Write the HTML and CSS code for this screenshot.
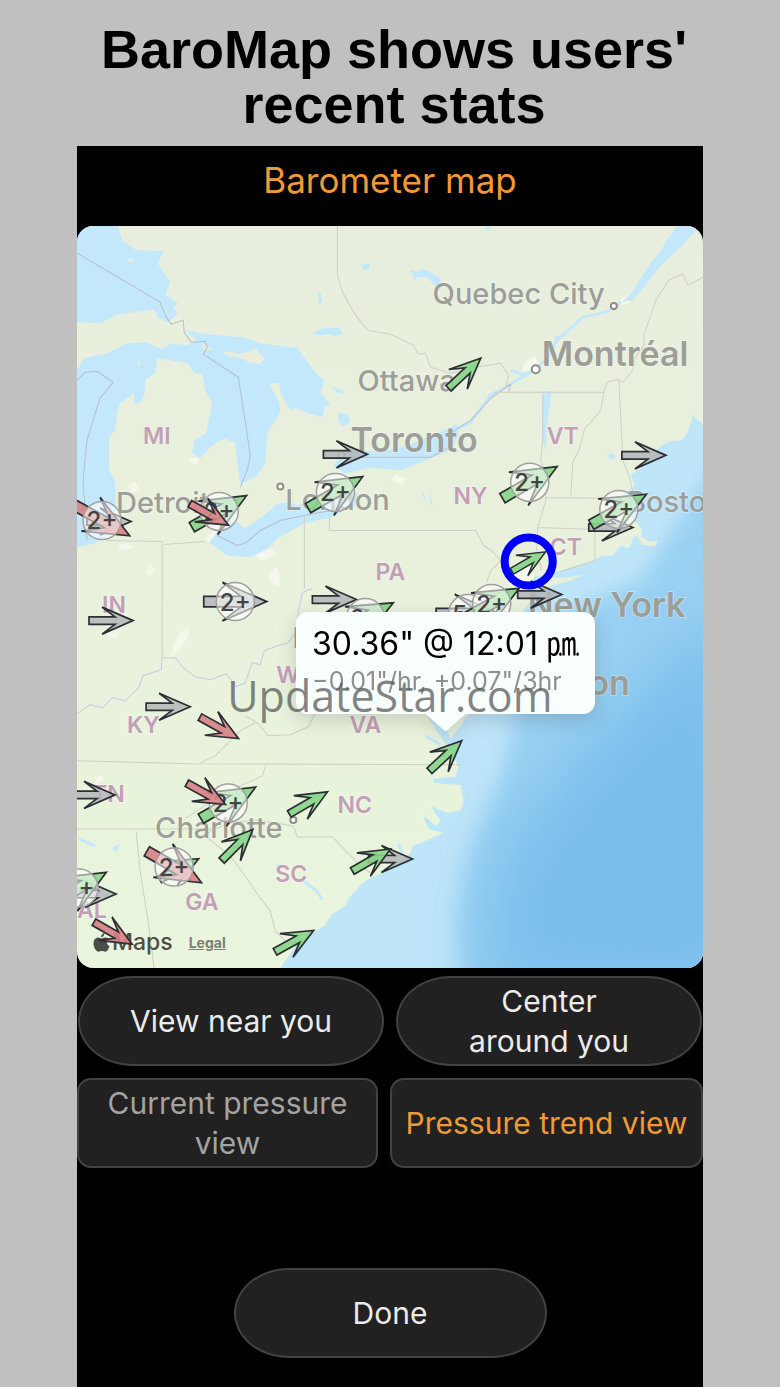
FILE: index.html
```html
<!DOCTYPE html>
<html lang="en">
<head>
    <meta charset="UTF-8">
    <meta name="viewport" content="width=device-width, initial-scale=1.0">
    <title>Barometer map</title>
    <link rel="stylesheet" href="styles.css">
</head>
<body>
    <h1 class="headline">BaroMap shows users' recent stats</h1>

    <main class="phone">
        <h2 class="screen-title">Barometer map</h2>

        <div class="map">
            <svg class="map-canvas" viewBox="77 226 625 741" preserveAspectRatio="xMidYMid slice" role="img" aria-label="Pressure trend map">
                <defs>
                    <path id="arrow" d="M-22,-3.7 L4,-3.7 L-9,-13.5 L22,0 L-9,13.5 L4,3.7 L-22,3.7 Z"/>
                    <linearGradient id="land" x1="0" y1="0" x2="0" y2="1">
                        <stop offset="0" stop-color="#e8eedd"/>
                        <stop offset="1" stop-color="#e9f5dc"/>
                    </linearGradient>
                    <filter id="soft" x="-20%" y="-20%" width="140%" height="140%">
                        <feGaussianBlur stdDeviation="10"/>
                    </filter>
                    <filter id="softer" x="-30%" y="-30%" width="160%" height="160%">
                        <feGaussianBlur stdDeviation="35"/>
                    </filter>
                    <clipPath id="ocean-clip">
                        <path id="ocean-shape" d="M702,424 L697,420 L692,415 L687,432 L681,440 L668,441 L656,449 L650,460 L640,468 L630,474 L634,486 L622,493 L624,505 L632,518 L641,528 L640,541 L634,534 L628,548 L620,545 L612,555 L600,556 L590,561 L560,570 L545,576 L534,576 L528,586 L531,597 L522,612 L510,620 L500,650 L480,690 L468,713 L458,728 L450,738 L446,728 L436,712 L426,714 L440,736 L448,748 L458,765 L455,776 L432,778 L434,782 L460,784 L463,800 L460,809 L447,812 L430,805 L440,820 L436,825 L422,814 L428,828 L443,832 L425,840 L412,845 L410,852 L400,860 L385,870 L370,877 L362,882 L350,895 L345,905 L332,913 L324,925 L310,933 L295,945 L288,955 L280,967 L702,967 Z"/>
                    </clipPath>
                </defs>

                <!-- land and towns -->
                <rect x="77" y="226" width="625" height="741" fill="url(#land)"/>
                <path class="city-area" d="M524,362 l10,-6 5,8 -6,10 -12,-1z M618,300 l8,-4 4,6 -9,3z M77,393 l6,-4 -1,10 -5,5z M190,457 l9,1 -2,6 -8,-2z M128,485 l7,-4 4,8 -8,4z M149,563 l6,6 -6,8 -3,-5z M268,575 l8,-9 4,12 -1,8 -8,-3z M180,632 l8,-6 0,9 -8,14 -11,10 5,-16z M110,630 l9,2 -4,6 -8,-2z M250,552 l22,-4 4,6 -14,7z M97,775 l8,2 -10,8z M508,578 l20,-14 8,14 -16,12z M470,595 l18,-8 4,12 -24,8z M395,474 l10,4 -3,6 -12,-4z M205,538 l12,-12 6,4 -12,14z M120,543 l14,2 -6,5 -10,-2z"/>

                <!-- ocean -->
                <use href="#ocean-shape" fill="#bfe5f9"/>
                <g clip-path="url(#ocean-clip)">
                    <path d="M720,460 L685,510 L640,580 L580,605 L530,640 L514,712 L510,735 L504,765 L492,800 L472,845 L463,880 L456,930 L466,990 L760,1000 Z" fill="#9ad1f2" filter="url(#soft)"/>
                    <path d="M740,600 L670,660 L610,720 L540,800 L500,850 L480,990 L760,1000 Z" fill="#78beeb" filter="url(#softer)"/>
                </g>
                <path class="island" d="M530,583 L545,577 L566,577 L582,574 L570,580 L548,586 L533,589 Z M640,536 L648,541 L657,540 L654,546 L640,544 Z M457,808 L462,795 L460,806 Z"/>

                <!-- lakes and rivers -->
                <g class="water">
                    <path d="M77,226 L118,226 L122,240 L136,250 L163,251 L158,264 L170,282 L165,295 L178,303 L173,307 L178,313 L168,322 L158,318 L154,309 L135,312 L118,314 L100,323 L77,322 Z"/>
                    <path d="M77,370 L84,358 L93,356 L107,353 L127,343 L147,342 L162,349 L170,343 L187,345 L196,340 L185,330 L200,333 L217,335 L244,337 L260,343 L277,345 L297,348 L303,356 L310,365 L316,374 L324,380 L320,393 L330,403 L324,406 L322,417 L307,413 L294,407 L290,410 L280,393 L279,383 L269,383 L279,402 L280,412 L267,433 L265,463 L257,475 L240,484 L237,463 L235,443 L224,438 L210,447 L200,458 L192,453 L194,440 L206,433 L212,403 L205,390 L202,373 L195,373 L187,363 L170,360 L157,358 L155,373 L145,380 L145,392 L140,403 L134,403 L134,393 L120,403 L117,413 L115,430 L109,437 L109,470 L115,480 L116,510 L107,537 L94,543 L77,547 Z"/>
                    <path d="M209,542 L220,528 L232,518 L238,522 L244,528 L264,515 L277,503 L290,502 L296,505 L320,499 L336,497 L358,492 L354,505 L330,517 L304,523 L277,538 L268,548 L250,557 L227,555 Z"/>
                    <path d="M225,500 l9,-5 4,8 -6,8 -8,-3z"/>
                    <path d="M333,466 L340,455 L352,450 L375,451 L395,449 L420,440 L440,432 L456,424 L458,434 L450,450 L425,460 L400,470 L370,467 L345,473 Z"/>
                    <path d="M621,302 L630,294 L645,270 L660,250 L666,240 L676,226 L698,226 L682,245 L660,265 L645,285 L632,300 Z"/>
                    <path d="M541,391 L551,391 L549,405 L546,425 L545,450 L541,436 L542,410 Z"/>
                    <path d="M311,333 l14,-6 6,1 8,-1 4,7 -8,2 -8,-2 -8,1z M361,265 l9,-2 -2,7 -6,0z M317,293 l3,-1 2,8 -3,6z M410,270 l8,2 4,-3 10,4 8,6 2,10 -8,-4 -8,-8 -8,0 -4,4z M337,412 l10,2 3,8 -8,4 -4,-6z M606,455 l6,-2 4,5 -6,1z M484,228 l6,-2 -2,6z M332,387 l10,3 2,4 -8,-2z M112,847 l8,-4 -4,8z M422,488 l3,12 -3,-4z M430,490 l2,18 -3,-8z M275,864 l6,-1 -2,5z"/>
                    <path class="stream" d="M452,430 L470,422 L490,395 L510,384 L530,372 L545,360 L556,340 L572,326 L582,317 L605,312 L620,302"/>
                    <path class="stream" d="M510,370 L520,374 L530,372 M554,338 L566,334"/>
                    <path class="stream" d="M302,879 L316,890 L322,898 M425,735 L440,744 M79,838 L95,845 M398,843 L402,852"/>
                </g>
                <path class="island" d="M222,352 l8,-1 8,3 12,-3 6,-3 4,6 5,4 -6,6 -8,-1 -10,-5 -12,-2z M200,344 l8,2 4,4 -8,0z M126,260 l6,-2 2,3 -6,1z M136,362 l4,-1 0,4z"/>

                <!-- borders -->
                <g class="border">
                    <path class="national" d="M77,253 L160,302 L165,315 L171,324 L183,320 L184,332 L191,342 L205,341 L207,347 L203,354 L238,377 L244,415 L250,455 L247,470 L240,487 M217,535 L237,545 L246,542 L260,530 L280,520 L304,515 L330,510 L352,497 M345,457 L430,457 L448,447 L454,430 L470,420 L490,398 L510,384 L508,392"/>
                    <path class="national" d="M77,380 L85,372 L97,371 L113,382 L100,398 L93,420 L87,440 L83,480 L87,540"/>
                    <path d="M493,392 L603,392 L606,382 L617,379 L622,382 L632,370 L634,358 L643,345 L643,335 L655,300 L668,280 L682,274 L687,285 L702,277"/>
                    <path d="M337,226 L337,275 L342,292 L355,315 L367,330 L390,334 L413,345 L418,354 L425,353 L430,367 L450,373 L475,367 L500,363 L508,375 L505,388"/>
                    <path d="M107,540 L162,541 L162,657 M164,544 L205,541 M304,516 V588 M329,516 V530 H475 L483,545 L493,552 L500,560 L490,570 L486,582"/>
                    <path class="river" d="M312,588 L302,592 L298,610 L297,630 L288,642 L277,645 L264,650 L260,664 L252,662 L245,682 L236,686 L226,673 L210,679 L195,676 L184,668 L175,657 L162,657 L161,669 L143,675 L138,688 L125,700 L112,697 L103,707 L90,704 L77,713"/>
                    <path d="M77,760 L190,763 L460,764 M77,828 H212 M205,835 L212,829 L230,822 L257,819 L293,825 L297,836 H332 L360,865 L370,872 M136,830 L140,870 L148,920 L154,967 M205,835 L230,855 L245,875 L257,893 L270,910 L275,930 L290,945"/>
                    <path d="M266,763 L262,775 L240,785 L212,800 L186,817 M200,762 L215,755 L225,745 L240,730 L255,722 M245,715 L258,723 L268,735 L290,734 L308,726 L315,712"/>
                    <path d="M542,395 V440 L540,460 L545,475 L545,500 L537,527 L536,550 L541,570 M603,392 L600,410 L590,422 L584,428 L578,450 L572,462 L570,495 M618,380 L622,460 L628,475 L632,491 M545,497 L620,498 L624,496 M537,527 L595,529 L612,528 M594,529 V560 L560,571"/>
                </g>

                <!-- place names -->
                <g class="city">
                    <text x="432" y="304">Quebec City</text>
                    <text x="357" y="391">Ottawa</text>
                    <text x="116" y="513">Detroit</text>
                    <text x="285" y="510">London</text>
                    <text x="626" y="512">Boston</text>
                    <text x="292" y="647">P</text>
                    <text x="155" y="837">Charlotte</text>
                </g>
                <g class="city big">
                    <text x="541" y="366">Montréal</text>
                    <text x="350" y="452">Toronto</text>
                    <text x="527" y="616">New York</text>
                    <text x="629" y="694" text-anchor="end">Washington</text>
                </g>
                <g class="state">
                    <text x="143" y="444">MI</text>
                    <text x="546" y="444">VT</text>
                    <text x="453" y="504">NY</text>
                    <text x="549" y="554">CT</text>
                    <text x="375" y="579">PA</text>
                    <text x="102" y="612">IN</text>
                    <text x="276" y="682">WV</text>
                    <text x="127" y="732">KY</text>
                    <text x="349" y="732">VA</text>
                    <text x="92" y="801">TN</text>
                    <text x="337" y="812">NC</text>
                    <text x="275" y="881">SC</text>
                    <text x="185" y="909">GA</text>
                    <text x="77" y="917">AL</text>
                </g>
                <g class="dot">
                    <circle cx="613" cy="306" r="3"/>
                    <circle cx="535" cy="369" r="4"/>
                    <circle cx="341" cy="455" r="3"/>
                    <circle cx="280" cy="486" r="3"/>
                    <circle cx="293" cy="819" r="3"/>
                </g>

                <!-- stations -->
                <g class="station">
                    <use class="up" href="#arrow" transform="translate(464 373) rotate(-43)"/>
                    <use class="flat" href="#arrow" transform="translate(345 454)"/>
                    <use class="flat" href="#arrow" transform="translate(643 455)"/>
                    <use class="flat" href="#arrow" transform="translate(109 521)"/>
                    <use class="flat" href="#arrow" transform="translate(610 527)"/>
                    <use class="flat" href="#arrow" transform="translate(539 594)"/>
                    <use class="flat" href="#arrow" transform="translate(334 599)"/>
                    <use class="flat" href="#arrow" transform="translate(111 620)"/>
                    <use class="flat" href="#arrow" transform="translate(168 706)"/>
                    <use class="down" href="#arrow" transform="translate(219 727) rotate(29)"/>
                    <use class="flat" href="#arrow" transform="translate(93 794)"/>
                    <use class="up" href="#arrow" transform="translate(308 802) rotate(-30)"/>
                    <use class="flat" href="#arrow" transform="translate(390 858)"/>
                    <use class="up" href="#arrow" transform="translate(371 859) rotate(-30)"/>
                    <use class="up" href="#arrow" transform="translate(294 940) rotate(-29)"/>
                    <use class="up" href="#arrow" transform="translate(445 755) rotate(-43)"/>
                    <use class="up" href="#arrow" transform="translate(179 868) rotate(-28)"/>
                    <use class="flat" href="#arrow" transform="translate(94 893)"/>
                    <use class="up" href="#arrow" transform="translate(528 561) rotate(-30) scale(.88)"/>
                </g>
                <g class="station cluster">
                    <g transform="translate(102 520)"><use class="down" href="#arrow" transform="rotate(29) scale(1.43)"/><circle r="19"/><text y="9">2+</text></g>
                    <g transform="translate(219 511)"><use class="up" href="#arrow" transform="rotate(-30) scale(1.43)"/><circle r="19"/><text y="9">2+</text></g>
                    <g transform="translate(335 492)"><use class="up" href="#arrow" transform="rotate(-30) scale(1.43)"/><circle r="19"/><text y="9">2+</text></g>
                    <g transform="translate(529 482)"><use class="up" href="#arrow" transform="rotate(-30) scale(1.43)"/><circle r="19"/><text y="9">2+</text></g>
                    <g transform="translate(618 509)"><use class="up" href="#arrow" transform="rotate(-29) scale(1.43)"/><circle r="19"/><text y="9">2+</text></g>
                    <g transform="translate(235 601)"><use class="flat" href="#arrow" transform="scale(1.43)"/><circle r="19"/><text y="9">2+</text></g>
                    <g transform="translate(365 617)"><use class="up" href="#arrow" transform="rotate(-28) scale(1.43)"/><circle r="19"/><text y="9">2+</text></g>
                    <g transform="translate(467 613)"><use class="flat" href="#arrow" transform="scale(1.43)"/><circle r="19"/><text y="9">5+</text></g>
                    <g transform="translate(491 603)"><use class="up" href="#arrow" transform="rotate(-29) scale(1.43)"/><circle r="19"/><text y="9">2+</text></g>
                    <g transform="translate(228 802)"><use class="up" href="#arrow" transform="rotate(-30) scale(1.43)"/><circle r="19"/><text y="9">2+</text></g>
                    <g transform="translate(174 866)"><use class="down" href="#arrow" transform="rotate(30) scale(1.43)"/><circle r="19"/><text y="9">2+</text></g>
                    <g transform="translate(79 887)"><use class="up" href="#arrow" transform="rotate(-30) scale(1.43)"/><circle r="19"/><text y="9">2+</text></g>
                </g>
                <g class="station">
                    <use class="down" href="#arrow" transform="translate(209 514) rotate(29)"/>
                    <use class="down" href="#arrow" transform="translate(206 793) rotate(29)"/>
                    <use class="up" href="#arrow" transform="translate(237 844) rotate(-45)"/>
                </g>
                <circle class="selected" cx="528" cy="561" r="24"/>
            </svg>

            <div class="attribution">
                <span class="brand">
                    <svg class="apple" viewBox="0 0 16 19" aria-hidden="true">
                        <path d="M11,0 C11,2.500 9.500,4.200 7.600,4.200 C7.500,2 9,0.400 11,0 Z M8,5.500 C9,5.500 10,4.500 12,4.500 C13.500,4.500 14.700,5.300 15.400,6.300 C12.500,8 13,12 16,13.200 C15.200,15.600 13.500,18.700 11.800,18.700 C10.500,18.700 10,18 8.400,18 C6.800,18 6.200,18.700 5,18.700 C2.500,18.700 0,14.200 0,10.600 C0,6.900 2.200,4.600 4.600,4.600 C6,4.600 7,5.500 8,5.500 Z"/>
                    </svg>Maps
                </span>
                <a class="legal" href="#legal">Legal</a>
            </div>
            <!-- drawn over the brand mark -->
            <svg class="map-canvas over" viewBox="77 226 625 741" preserveAspectRatio="xMidYMid slice" aria-hidden="true">
                <g class="station"><use class="down" href="#arrow" transform="translate(113 932) rotate(30)"/></g>
            </svg>

            <div class="callout">
                <p class="reading">30.36" @ 12:01 ㏘</p>
                <p class="trend">−0.01"/hr, +0.07"/3hr</p>
            </div>
            <span class="watermark">UpdateStar.com</span>
        </div>

        <div class="actions">
            <button type="button" class="pill">View near you</button>
            <button type="button" class="pill">Center<br>around you</button>
        </div>
        <div class="tabs">
            <button type="button" class="tab">Current pressure<br>view</button>
            <button type="button" class="tab active">Pressure trend view</button>
        </div>
        <button type="button" class="pill done">Done</button>
    </main>
</body>
</html>
```
FILE: styles.css
```css
* {
    box-sizing: border-box;
}
body {
    margin: 0;
    padding: 22px 77px 0;
    min-height: 100vh;
    display: flex;
    flex-direction: column;
    background-color: #c0c0c0;
    font-family: Inter, "Noto Sans CJK JP", sans-serif;
}
h1, h2, p {
    margin: 0;
}
.headline {
    max-width: 600px;
    margin: 0 auto 14px;
    padding-left: 8px;
    font: bold 54px/55px "Liberation Sans", Arial, sans-serif;
    text-align: center;
    color: black;
}
.phone {
    flex: 1;
    display: flex;
    flex-direction: column;
    padding-bottom: 29px;
    background-color: black;
}
.screen-title {
    padding: 12px 0 24px;
    font-size: 35px;
    line-height: 44px;
    font-weight: 400;
    text-align: center;
    color: #f09a37;
}

/* map */
.map {
    position: relative;
    border-radius: 16px;
    overflow: hidden;
}
.map-canvas {
    display: block;
    width: 100%;
}
.map-canvas.over {
    position: absolute;
    inset: 0;
}
.water {
    fill: #c4e8fb;
}
.stream {
    fill: none;
    stroke: #c4e8fb;
    stroke-width: 3;
    stroke-linejoin: round;
}
.island {
    fill: #e8eedb;
}
.city-area {
    fill: #f5f7ea;
}
.border {
    fill: none;
    stroke: #cfcfc6;
    stroke-width: 1;
    stroke-linejoin: round;
}
.border .national {
    stroke: #b7bdc9;
}
.border .river {
    stroke: #c6cee2;
}
.city, .state {
    paint-order: stroke;
    stroke: rgba(255, 255, 255, 0.3);
    stroke-width: 2px;
}
.city {
    font-size: 29px;
    font-weight: 500;
    fill: #9d9e97;
}
.big {
    font-size: 34px;
    font-weight: 600;
}
.state {
    font-size: 23px;
    font-weight: 600;
    fill: #c29fb6;
}
.dot {
    fill: white;
    stroke: #8e8e8a;
    stroke-width: 2;
}
.station {
    stroke: #2c2f33;
    stroke-width: 1.7;
}
.cluster use {
    stroke-width: 1.2;
}
.up {
    fill: #86d587;
    fill-opacity: 0.9;
}
.down {
    fill: #d87f84;
    fill-opacity: 0.9;
}
.flat {
    fill: #b4b6ba;
    fill-opacity: 0.85;
}
.cluster circle {
    fill: rgba(255, 255, 255, 0.55);
    stroke: #a0a0a0;
    stroke-width: 1.5;
}
.cluster text {
    fill: #444;
    stroke: none;
    font-size: 24px;
    font-weight: 500;
    text-anchor: middle;
}
.selected {
    fill: none;
    stroke: #0000f5;
    stroke-width: 8;
}
.attribution {
    position: absolute;
    left: 16px;
    bottom: 11px;
    display: flex;
    align-items: center;
    gap: 16px;
    color: #4b4e48;
}
.brand {
    display: flex;
    align-items: center;
    gap: 2px;
    font-size: 23px;
    line-height: 30px;
    font-weight: 500;
}
.apple {
    width: 17px;
    height: 19px;
    fill: #4b4e48;
}
.legal {
    font-size: 14px;
    font-weight: 700;
    color: #7b7f76;
}
.callout {
    position: absolute;
    left: 35%;
    top: 52%;
    padding: 12px 16px 16px;
    border-radius: 12px;
    background-color: #f9fefe;
    filter: drop-shadow(0 6px 10px rgba(0, 0, 0, 0.15));
    white-space: nowrap;
}
.callout::after {
    content: "";
    position: absolute;
    left: 50%;
    top: 100%;
    width: 40px;
    height: 17px;
    margin-left: -20px;
    background-color: #f9fefe;
    clip-path: polygon(0 0, 100% 0, 56% 92%, 50% 100%, 44% 92%);
}
.reading {
    font-size: 32px;
    line-height: 40px;
    color: black;
}
.trend {
    font-size: 25px;
    line-height: 34px;
    color: #8c9090;
}
.watermark {
    position: absolute;
    left: 24%;
    top: 60%;
    font: 43px/50px "Open Sans", sans-serif;
    color: rgba(90, 92, 90, 0.75);
}

/* buttons */
.actions, .tabs {
    display: grid;
    gap: 12px;
}
.actions {
    grid-template-columns: 1fr 1fr;
    margin: 8px 1px 12px;
}
.tabs {
    grid-template-columns: 301fr 313fr;
}
button {
    min-height: 90px;
    padding: 3px 8px;
    border: 2px solid #424242;
    background-color: #212121;
    color: #ebebeb;
    font-family: inherit;
    font-size: 30px;
    line-height: 40px;
    cursor: pointer;
}
.pill {
    border-radius: 56px / 46px;
}
.tab {
    border-radius: 14px;
    color: #a3a3a3;
}
.tab.active {
    color: #f09a37;
}
.done {
    width: 50%;
    margin: auto auto 0;
}
```
